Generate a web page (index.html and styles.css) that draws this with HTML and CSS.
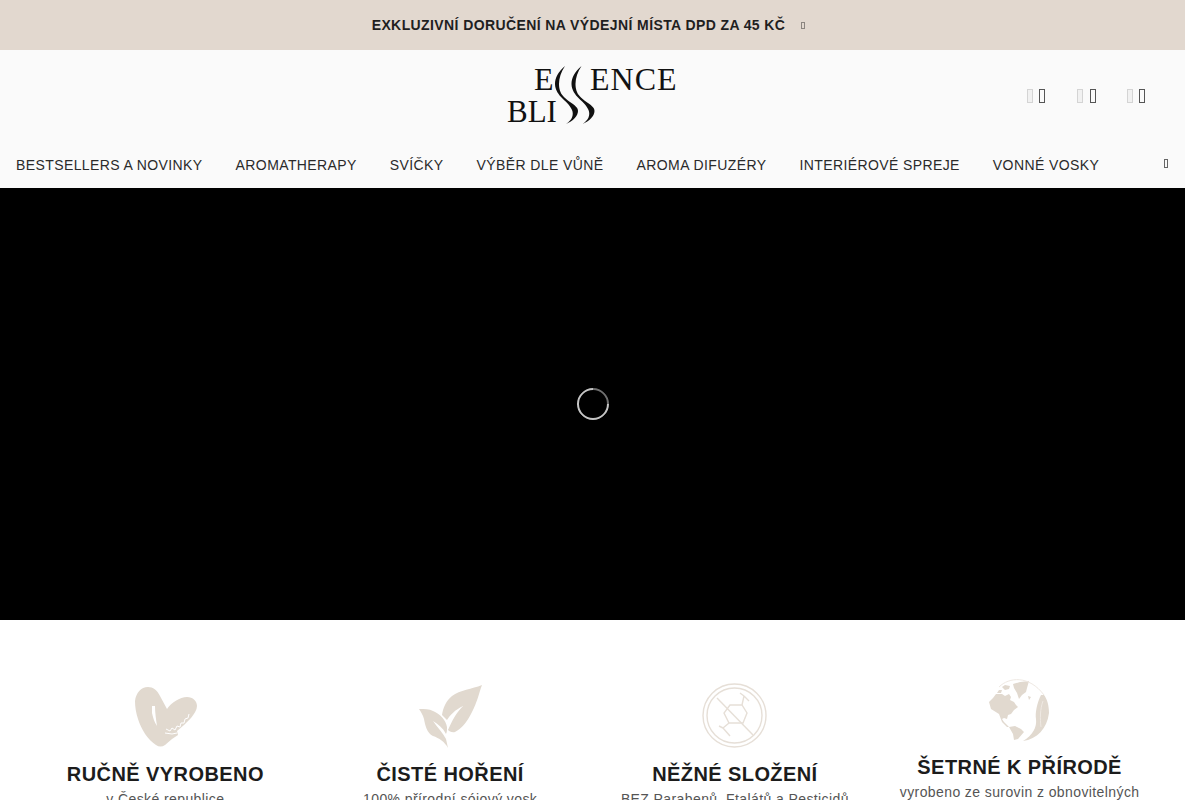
FILE: index.html
```html
<!DOCTYPE html>
<html lang="cs">
<head>
<meta charset="utf-8">
<title>Essence Bliss</title>
<link rel="stylesheet" href="styles.css">
</head>
<body>
<div class="page">
  <div class="promo">
    <span class="promo-text">EXKLUZIVNÍ DORUČENÍ NA VÝDEJNÍ MÍSTA DPD ZA 45 KČ</span>
    <span class="tofu tofu-promo"></span>
  </div>
  <header class="head">
    <div class="logo-row">
      <a class="logo" href="#" aria-label="Essence Bliss">
        <svg class="logo-svg" width="174" height="62" viewBox="0 0 174 62">
          <text class="logo-text" x="29" y="24">E</text>
          <text class="logo-text logo-wide" x="85" y="24">ENCE</text>
          <text class="logo-text logo-low" x="2" y="56">BLI</text>
          <path class="swash" d="M60 0C53 6 50 12 50 18C50 24 54 29 57 32C60 35 65 39 67 44C69 49 67 54 61 58C68 55 73 50 73 45C73 41 69 39 65 36C62 34 60 32 58.5 30.5C55 27 54 22 54 18C54 12 56 6 60 0Z"/>
          <path class="swash" transform="translate(16.5 0)" d="M60 0C53 6 50 12 50 18C50 24 54 29 57 32C60 35 65 39 67 44C69 49 67 54 61 58C68 55 73 50 73 45C73 41 69 39 65 36C62 34 60 32 58.5 30.5C55 27 54 22 54 18C54 12 56 6 60 0Z"/>
        </svg>
      </a>
      <div class="tools">
        <span class="tool"><i class="tofu tofu-light"></i><i class="tofu tofu-dark"></i></span>
        <span class="tool tool-wide"><i class="tofu tofu-light"></i><i class="tofu tofu-dark"></i></span>
        <span class="tool"><i class="tofu tofu-light"></i><i class="tofu tofu-dark"></i></span>
      </div>
    </div>
    <nav class="nav">
      <a href="#">BESTSELLERS A NOVINKY</a>
      <a href="#">AROMATHERAPY</a>
      <a href="#">SVÍČKY</a>
      <a href="#">VÝBĚR DLE VŮNĚ</a>
      <a href="#">AROMA DIFUZÉRY</a>
      <a href="#">INTERIÉROVÉ SPREJE</a>
      <a href="#">VONNÉ VOSKY</a>
      <span class="tofu tofu-nav"></span>
    </nav>
  </header>
  <section class="hero">
    <div class="spinner"></div>
  </section>
  <section class="features">
    <article class="feature">
      <svg class="ficon" width="70" height="70" viewBox="0 0 70 70">
        <path class="beige" d="M5 20C6 12 11 6 18 6C23 6 27 9 30 15L37 28C41 22 50 16 57 16C63 16 67 20 67 25C67 29 64 33 61 37L54 44L47 50L48 54L42 58L35 64C32 66 29 66 26 64C18 59 11 48 8 38C6 32 5 26 5 20Z"/>
        <path class="cut" d="M22 25L25 25C25 32 26 38 27 45C24 41 23 36 22 32Z"/>
        <path class="teeth" d="M36 48L40 50L42 47L45 49L47 45L50 46L51 42L54 42L55 38L58 37L59 33M35 52L42 53L47 52"/>
      </svg>
      <h3>RUČNĚ VYROBENO</h3>
      <p>v České republice</p>
    </article>
    <article class="feature">
      <svg class="ficon" width="70" height="70" viewBox="0 0 70 70">
        <path class="beige" d="M67 4C64 12 62 22 57 31C53 39 48 47 40 51C37 52 34 50 33 49C37 40 41 32 48 25C40 29 35 34 32 39L27 34C28 27 31 20 37 15C45 9 57 8 67 4Z"/>
        <path class="beige" d="M4 28C10 28 14 28 18 30C25 33 31 39 32 46C32 49 32 51 31 53C28 47 23 43 18 40C22 46 28 52 31 58L33 67C30 61 24 57 18 55C12 52 10 44 9 38C8 34 6 31 4 28Z"/>
      </svg>
      <h3>ČISTÉ HOŘENÍ</h3>
      <p>100% přírodní sójový vosk</p>
    </article>
    <article class="feature">
      <svg class="ficon" width="70" height="70" viewBox="0 0 70 70">
        <circle class="line" cx="34.5" cy="34.5" r="31.5"/>
        <circle class="line" cx="34.5" cy="34.5" r="27.5"/>
        <path class="line" d="M17 17L53 54"/>
        <path class="line" d="M30 24L42 24L47 32L43 42L29 42L24 32Z"/>
        <path class="line" d="M42 24L44 15M44 15L40 12M44 15L49 20M29 42L23 47M23 47L19 45M23 47L30 55"/>
      </svg>
      <h3>NĚŽNÉ SLOŽENÍ</h3>
      <p>BEZ Parabenů, Ftalátů a Pesticidů</p>
    </article>
    <article class="feature feature-raised">
      <svg class="ficon" width="70" height="70" viewBox="0 0 70 70">
        <path class="beige" d="M28 11L35 9L44 8L42 15L41 19L37 22L34 26L32 20L29 15Z"/>
        <path class="beige" d="M17 14L20 12L25 13L24 16L20 17ZM14 17L17 17L16 20L12 20Z"/>
        <path class="beige" d="M4 29L8 25L11 21L17 21L20 23L24 21L26 24L25 27L29 29L31 32L33 34L29 37L26 41L23 42L22 46L19 45L17 46L19 49L17 49L14 41L6 36Z"/>
        <path class="beige" d="M17 49L19 49L24 54L22 54Z"/>
        <path class="beige" d="M24 54L30 53L36 56L39 59L33 66L29 67L28 61Z"/>
        <path class="beige" d="M43 23L46 24L44 27Z"/>
        <path class="beige" d="M56 22C52 30 50 40 51 46C52 54 48 62 38 68C52 66 62 56 64 40C64 32 62 26 59 22Z"/>
        <path class="vein" d="M58 28C55 36 55 46 56 54"/>
        <path class="rim" d="M14 14C24 4 44 2 59 22"/>
      </svg>
      <h3>ŠETRNÉ K PŘÍRODĚ</h3>
      <p>vyrobeno ze surovin z obnovitelných</p>
    </article>
  </section>
</div>
</body>
</html>
```
FILE: styles.css
```css
* { box-sizing: border-box; }
html, body { margin: 0; padding: 0; height: 800px; overflow: hidden; background: #fff; }
body { font-family: "Liberation Sans", Arial, sans-serif; color: #1f1f1f; }
.page { width: 1185px; height: 800px; overflow: hidden; }
.promo { height: 50px; background: #e2d8cf; display: flex; align-items: center; justify-content: center; gap: 16px; padding-right: 8px; }
.promo-text { font-size: 14px; font-weight: 700; letter-spacing: .4px; color: #1f1f1f; }
.tofu { display: block; border: 1px solid #666; }
.tofu-promo { width: 4px; height: 7px; border-color: #8b8580; }
.head { background: #fafafa; height: 138px; display: flex; flex-direction: column; }
.logo-row { height: 93px; position: relative; display: flex; justify-content: center; padding-top: 16px; }
.logo { display: block; height: 62px; margin-left: -2px; }
.logo-svg { display: block; overflow: visible; }
.logo-text { font-family: "Liberation Serif", serif; font-size: 32px; fill: #111; }
.logo-wide { letter-spacing: 1px; }
.logo-low { font-size: 31px; }
.swash { fill: #111; }
.tools { position: absolute; top: 39px; left: 1027px; display: flex; gap: 30px; }
.tool { display: flex; justify-content: space-between; width: 18px; margin-right: 2px; }
.tool-wide { width: 19px; margin-right: 1px; }
.tofu-light { width: 6px; height: 14px; border-color: #d4d4d4; background: #f1f1f1; }
.tofu-dark { width: 6px; height: 14px; border-color: #555; }
.nav { display: flex; align-items: center; height: 44px; padding: 0 0 0 16px; gap: 33px; position: relative; }
.nav a { font-size: 14px; letter-spacing: .4px; color: #2a2a2a; text-decoration: none; white-space: nowrap; }
.tofu-nav { position: absolute; left: 1164px; top: 16px; width: 4px; height: 9px; }
.hero { height: 432px; background: #000; display: flex; align-items: center; justify-content: center; }
.spinner { width: 32px; height: 32px; border-radius: 50%; border: 2px solid #c4c4c4; border-right-color: #6f6f6f; transform: rotate(-45deg); }
.features { display: grid; grid-template-columns: repeat(4, 1fr); padding: 0 23px 0 23px; background: #fff; }
.feature { display: flex; flex-direction: column; align-items: center; padding-top: 61px; }
.feature-raised { padding-top: 53px; }
.ficon { display: block; }
.feature h3 { margin: 10px 0 0; font-size: 20px; line-height: 26px; font-weight: 700; letter-spacing: .42px; color: #1c1c1c; white-space: nowrap; }
.feature-raised h3 { margin-top: 11px; }
.feature p { margin: 2px 0 0; font-size: 14px; line-height: 20px; letter-spacing: .4px; color: #555; white-space: nowrap; }
.beige { fill: #e1d9cf; }
.cut { fill: #fff; }
.teeth { fill: none; stroke: #fff; stroke-width: 1; }
.vein { fill: none; stroke: #efe9e3; stroke-width: 1; }
.line { fill: none; stroke: #e6dfd7; stroke-width: 1.4; }
.rim { fill: none; stroke: #efe9e3; stroke-width: 1; }
```
